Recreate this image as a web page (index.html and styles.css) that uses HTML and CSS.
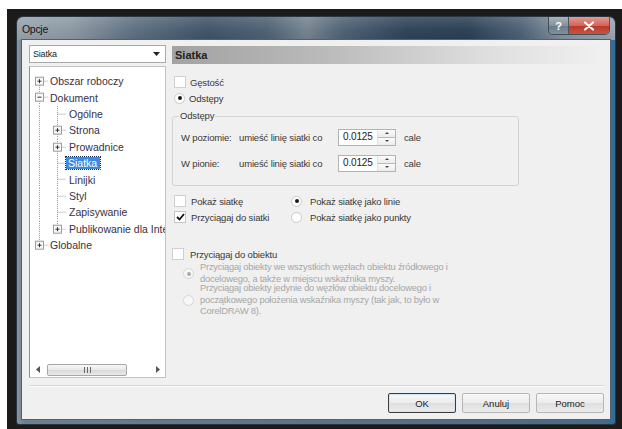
FILE: index.html
```html
<!DOCTYPE html>
<html lang="pl">
<head>
<meta charset="utf-8">
<title>Opcje</title>
<link rel="stylesheet" href="styles.css">
</head>
<body>
<div class="desk">
  <div class="window">
    <div class="titlebar">
      <span class="title">Opcje</span>
      <div class="caption-btns">
        <span class="cbtn help">?</span>
        <span class="cbtn close">
          <svg width="12" height="10" viewBox="0 0 12 10"><path d="M2 1.5 L10 8.5 M10 1.5 L2 8.5" stroke="#fff" stroke-width="2.2" stroke-linecap="round"/></svg>
        </span>
      </div>
    </div>
    <div class="frame">
      <div class="client">
        <div class="panes">
          <div class="nav">
            <div class="combo">
              <span class="combo-text">Siatka</span>
              <span class="combo-btn"><svg width="7" height="4" viewBox="0 0 7 4"><path d="M0 0 H7 L3.5 4 Z" fill="#222"/></svg></span>
            </div>
            <div class="tree">
              <ul class="tree-list">
                <li class="node">
                  <svg class="g0" viewBox="0 0 18 16.4"><path d="M8.5 8.2 V16.4 M8.5 8.2 H17" class="dots"/><rect x="4.5" y="4.2" width="8" height="8" class="box"/><path d="M6.5 8.2 H10.5 M8.5 6.2 V10.2" class="sign"/></svg>
                  <span class="label">Obszar roboczy</span>
                </li>
                <li class="node">
                  <svg class="g0" viewBox="0 0 18 16.4"><path d="M8.5 0 V16.4 M8.5 8.2 H17" class="dots"/><rect x="4.5" y="4.2" width="8" height="8" class="box"/><path d="M6.5 8.2 H10.5" class="sign"/></svg>
                  <span class="label">Dokument</span>
                </li>
                <li class="node">
                  <svg class="g1" viewBox="0 0 37 16.4"><path d="M8.5 0 V16.4 M26.5 0 V16.4 M26.5 8.2 H35" class="dots"/></svg>
                  <span class="label">Ogólne</span>
                </li>
                <li class="node">
                  <svg class="g1" viewBox="0 0 37 16.4"><path d="M8.5 0 V16.4 M26.5 0 V16.4 M26.5 8.2 H35" class="dots"/><rect x="22.5" y="4.2" width="8" height="8" class="box"/><path d="M24.5 8.2 H28.5 M26.5 6.2 V10.2" class="sign"/></svg>
                  <span class="label">Strona</span>
                </li>
                <li class="node">
                  <svg class="g1" viewBox="0 0 37 16.4"><path d="M8.5 0 V16.4 M26.5 0 V16.4 M26.5 8.2 H35" class="dots"/><rect x="22.5" y="4.2" width="8" height="8" class="box"/><path d="M24.5 8.2 H28.5 M26.5 6.2 V10.2" class="sign"/></svg>
                  <span class="label">Prowadnice</span>
                </li>
                <li class="node">
                  <svg class="g1" viewBox="0 0 37 16.4"><path d="M8.5 0 V16.4 M26.5 0 V16.4 M26.5 8.2 H35" class="dots"/></svg>
                  <span class="label selected">Siatka</span>
                </li>
                <li class="node">
                  <svg class="g1" viewBox="0 0 37 16.4"><path d="M8.5 0 V16.4 M26.5 0 V16.4 M26.5 8.2 H35" class="dots"/></svg>
                  <span class="label">Linijki</span>
                </li>
                <li class="node">
                  <svg class="g1" viewBox="0 0 37 16.4"><path d="M8.5 0 V16.4 M26.5 0 V16.4 M26.5 8.2 H35" class="dots"/></svg>
                  <span class="label">Styl</span>
                </li>
                <li class="node">
                  <svg class="g1" viewBox="0 0 37 16.4"><path d="M8.5 0 V16.4 M26.5 0 V16.4 M26.5 8.2 H35" class="dots"/></svg>
                  <span class="label">Zapisywanie</span>
                </li>
                <li class="node">
                  <svg class="g1" viewBox="0 0 37 16.4"><path d="M8.5 0 V16.4 M26.5 0 V8.2 M26.5 8.2 H35" class="dots"/><rect x="22.5" y="4.2" width="8" height="8" class="box"/><path d="M24.5 8.2 H28.5 M26.5 6.2 V10.2" class="sign"/></svg>
                  <span class="label">Publikowanie dla Internetu</span>
                </li>
                <li class="node">
                  <svg class="g0" viewBox="0 0 18 16.4"><path d="M8.5 0 V8.2 M8.5 8.2 H17" class="dots"/><rect x="4.5" y="4.2" width="8" height="8" class="box"/><path d="M6.5 8.2 H10.5 M8.5 6.2 V10.2" class="sign"/></svg>
                  <span class="label">Globalne</span>
                </li>
              </ul>
              <div class="hscroll">
                <span class="sb-arrow"><svg width="4" height="7" viewBox="0 0 4 7"><path d="M4 0 V7 L0 3.5 Z" fill="#555"/></svg></span>
                <span class="sb-thumb"><svg width="7" height="6" viewBox="0 0 7 6"><path d="M0.5 0 V6 M3.5 0 V6 M6.5 0 V6" stroke="#666" stroke-width="1"/></svg></span>
                <span class="sb-track"></span>
                <span class="sb-arrow"><svg width="4" height="7" viewBox="0 0 4 7"><path d="M0 0 V7 L4 3.5 Z" fill="#555"/></svg></span>
              </div>
            </div>
          </div>

          <div class="page">
            <div class="page-head">Siatka</div>

            <div class="opts">
              <label class="opt"><span class="chk"></span>Gęstość</label>
              <label class="opt"><span class="rad on"></span>Odstępy</label>
            </div>

            <div class="group">
              <span class="group-label">Odstępy</span>
              <div class="spacing-row">
                <span class="axis">W poziomie:</span>
                <span class="phrase">umieść linię siatki co</span>
                <span class="spin"><span class="spin-val">0.0125</span><span class="spin-btns"><span class="sp up"></span><span class="sp down"></span></span></span>
                <span class="unit">cale</span>
              </div>
              <div class="spacing-row">
                <span class="axis">W pionie:</span>
                <span class="phrase">umieść linię siatki co</span>
                <span class="spin"><span class="spin-val">0.0125</span><span class="spin-btns"><span class="sp up"></span><span class="sp down"></span></span></span>
                <span class="unit">cale</span>
              </div>
            </div>

            <div class="show-grid">
              <div class="col-left">
                <label class="opt"><span class="chk"></span>Pokaż siatkę</label>
                <label class="opt"><span class="chk checked"><svg width="9" height="8" viewBox="0 0 9 8"><path d="M1 4 L3.5 6.5 L8 1" fill="none" stroke="#111" stroke-width="1.8"/></svg></span>Przyciągaj do siatki</label>
              </div>
              <div class="col-right">
                <label class="opt"><span class="rad on"></span>Pokaż siatkę jako linie</label>
                <label class="opt"><span class="rad"></span>Pokaż siatkę jako punkty</label>
              </div>
            </div>

            <label class="opt snap"><span class="chk"></span>Przyciągaj do obiektu</label>
            <div class="snap-choices">
              <div class="choice">
                <span class="rad off on"></span>
                <span class="choice-text">Przyciągaj obiekty we wszystkich węzłach obiektu źródłowego i<br>docelowego, a także w miejscu wskaźnika myszy.</span>
              </div>
              <div class="choice">
                <span class="rad off"></span>
                <span class="choice-text">Przyciągaj obiekty jedynie do węzłów obiektu docelowego i<br>początkowego położenia wskaźnika myszy (tak jak, to było w<br>CorelDRAW 8).</span>
              </div>
            </div>
          </div>
        </div>

        <div class="sep"></div>

        <div class="buttons">
          <button class="btn default">OK</button>
          <button class="btn">Anuluj</button>
          <button class="btn">Pomoc</button>
        </div>
      </div>
    </div>
  </div>
</div>
</body>
</html>
```

FILE: styles.css
```css
* { box-sizing: border-box; }

html, body {
  margin: 0;
  padding: 0;
  background: #fff;
}

body {
  width: 622px;
  height: 429px;
  overflow: hidden;
  font-family: "Liberation Sans", Arial, sans-serif;
  color: #333;
}

/* dark desktop behind the dialog */
.desk {
  margin: 9px 0 0 7px;
  width: 615px;
  height: 420px;
  background: #1c1b19;
  padding: 8px 7px 5px 10px;
}

.window {
  width: 598px;
  height: 407px;
  display: flex;
  flex-direction: column;
  border-radius: 6px 6px 2px 2px;
  overflow: hidden;
  box-shadow: 0 0 0 1px #2a3642;
}

/* glass caption */
.titlebar {
  height: 23px;
  flex: none;
  display: flex;
  align-items: flex-start;
  justify-content: space-between;
  background:
    linear-gradient(to bottom, rgba(255,255,255,0.14), rgba(255,255,255,0.02) 55%, rgba(0,0,0,0.05)),
    linear-gradient(to right, #98a3ad 0px, #8b97a2 55px, #5b6d7f 120px, #3f5367 190px, #4d6073 250px, #74848f 290px, #4e6174 325px, #2e4257 390px, #2a3f54 450px, #4d6175 505px, #84929f 545px, #9ba6b1 598px);
}

.title {
  padding: 6px 0 0 5px;
  font-size: 10.5px;
  letter-spacing: -0.3px;
  color: #151515;
}

.caption-btns {
  display: flex;
  margin: 0 6px 0 0;
  height: 17px;
  border-radius: 0 0 4px 4px;
  overflow: hidden;
  box-shadow: 0 0 0 1px rgba(40,50,60,0.7);
}

.cbtn {
  height: 17px;
  display: flex;
  align-items: center;
  justify-content: center;
}

.cbtn.help {
  width: 20px;
  color: #fff;
  font-size: 11px;
  font-weight: bold;
  background: linear-gradient(to bottom, #a9b3bd, #85929f 50%, #6a7a88 51%, #82909d);
  border-right: 1px solid #4b5560;
}

.cbtn.close {
  width: 40px;
  background: linear-gradient(to bottom, #e49a8e, #d2645a 50%, #b8372c 51%, #c9533f);
}

/* side and bottom frame around the client area */
.frame {
  flex: 1;
  padding: 0 5px 5px 5px;
  background: linear-gradient(to right, #8794a0 0px, #6f7f8e 8px, #5f7285 300px, #4a6a86 585px, #2d6e9e 598px);
}

.client {
  height: 100%;
  background: #f0f0f0;
  padding: 5px 6px 6px 7px;
  display: flex;
  flex-direction: column;
  box-shadow: 0 0 0 1px #53616e;
}

.panes {
  height: 333px;
  display: flex;
  gap: 6px;
}

/* left navigation column */
.nav {
  width: 137px;
  display: flex;
  flex-direction: column;
  gap: 3px;
}

.combo {
  height: 18px;
  display: flex;
  align-items: center;
  background: #fff;
  border: 1px solid #a9a9a9;
}

.combo-text {
  flex: 1;
  padding-left: 3px;
  font-size: 9px;
  letter-spacing: -0.2px;
  color: #222;
}

.combo-btn {
  width: 17px;
  height: 100%;
  display: flex;
  align-items: center;
  justify-content: center;
}

.tree {
  flex: 1;
  display: flex;
  flex-direction: column;
  background: #fff;
  border: 1px solid #c3c3c3;
  border-left-color: #8d8d8d;
  padding-left: 1px;
  overflow: hidden;
}

.tree-list {
  list-style: none;
  margin: 0;
  padding: 6px 0 0 0;
  flex: 1;
  overflow: hidden;
}

.node {
  height: 16.4px;
  display: flex;
  align-items: center;
  white-space: nowrap;
}

.node svg { height: 16.4px; flex: none; }
.node .g0 { width: 18px; }
.node .g1 { width: 37px; }

.dots {
  fill: none;
  stroke: #9a9a9a;
  stroke-width: 1;
  stroke-dasharray: 1 1;
}

.box {
  fill: #f7f7f7;
  stroke: #9c9c9c;
  stroke-width: 1;
}

.sign {
  stroke: #333;
  stroke-width: 1;
}

.label {
  font-size: 10.5px;
  color: #3b2f45;
  padding: 0 1px;
  line-height: 12px;
}

.label.selected {
  background: #3d8be0;
  color: #fff;
  outline: 1px dotted #1c2d55;
  margin-left: -2px;
  padding: 0 3px 0 2px;
}

.hscroll {
  height: 13px;
  display: flex;
  align-items: center;
  margin-bottom: 1px;
}

.sb-arrow {
  width: 14px;
  height: 13px;
  display: flex;
  align-items: center;
  justify-content: center;
}

.sb-thumb {
  width: 80px;
  height: 12px;
  margin-left: 2px;
  display: flex;
  align-items: center;
  justify-content: center;
  border: 1px solid #a6a6a6;
  border-radius: 2px;
  background: linear-gradient(to bottom, #f8f8f8, #e6e6e6 50%, #d9d9d9 51%, #e9e9e9);
}

.sb-track { flex: 1; }

/* right settings page */
.page {
  flex: 1;
  display: flex;
  flex-direction: column;
  font-size: 9.5px;
  letter-spacing: -0.15px;
  color: #383838;
}

.page-head {
  margin-top: 1px;
  height: 18px;
  display: flex;
  align-items: center;
  padding-left: 3px;
  font-size: 11px;
  font-weight: bold;
  letter-spacing: 0;
  color: #222;
  background: linear-gradient(to right, #a2a2a2 0%, #bababa 35%, #e0e0e0 75%, #f0f0f0 100%);
}

.opts {
  margin-top: 10px;
  display: flex;
  flex-direction: column;
}

.opt {
  height: 16px;
  display: flex;
  align-items: center;
  white-space: nowrap;
}

.chk {
  width: 12px;
  height: 12px;
  margin: 0 4px 0 2px;
  background: #fff;
  border: 1px solid #cfcfcf;
  display: flex;
  align-items: center;
  justify-content: center;
  flex: none;
}

.chk.checked { border-color: #c4c4c4; }

.rad {
  width: 11px;
  height: 11px;
  margin: 0 4px 0 2px;
  border-radius: 50%;
  background: #fff;
  border: 1px solid #c9c9c9;
  display: flex;
  align-items: center;
  justify-content: center;
  flex: none;
}

.rad.on::after {
  content: "";
  width: 4px;
  height: 4px;
  border-radius: 50%;
  background: #1a1a1a;
}

.rad.off {
  border-color: #d6d6d6;
  background: #f7f7f7;
}

.rad.off.on::after { background: #a9a9a9; }

.group {
  margin-top: 10px;
  width: 347px;
  border: 1px solid #d3d3d3;
  border-radius: 3px;
  padding: 0 0 12px 8px;
  display: flex;
  flex-direction: column;
  gap: 6px;
}

.group-label {
  align-self: flex-start;
  margin: -7px 0 -1px -2px;
  padding: 0 1px;
  line-height: 12px;
  background: #f0f0f0;
}

.spacing-row {
  height: 20px;
  display: flex;
  align-items: center;
  white-space: nowrap;
}

.axis { width: 58px; }
.phrase { width: 99px; }

.spin {
  width: 58px;
  height: 17px;
  display: flex;
  background: #fff;
  border: 1px solid #b3b3b3;
}

.spin-val {
  flex: 1;
  padding: 1px 0 0 4px;
  font-size: 10px;
  color: #222;
}

.spin-btns {
  width: 18px;
  display: flex;
  flex-direction: column;
  border-left: 1px solid #e2e2e2;
}

.sp {
  flex: 1;
  display: flex;
  align-items: center;
  justify-content: center;
  background: linear-gradient(to bottom, #fbfbfb, #ececec);
}

.sp.up { border-bottom: 1px solid #b8b8b8; }

.sp.up::after {
  content: "";
  border-left: 2px solid transparent;
  border-right: 2px solid transparent;
  border-bottom: 2px solid #444;
}

.sp.down::after {
  content: "";
  border-left: 2px solid transparent;
  border-right: 2px solid transparent;
  border-top: 2px solid #444;
}

.unit { margin-left: 8px; }

.show-grid {
  margin-top: 7px;
  display: flex;
}

.col-left {
  width: 117px;
  display: flex;
  flex-direction: column;
}

.col-left .chk { margin-right: 5px; }

.col-right {
  display: flex;
  flex-direction: column;
}

.col-right .rad { margin-right: 8px; }

.snap { margin-top: 21px; }
.snap .chk { margin-left: 0; margin-right: 6px; }

.snap-choices {
  display: flex;
  flex-direction: column;
  margin-top: 0;
  padding-left: 11px;
}

.choice {
  display: flex;
  align-items: center;
}

.choice .rad { margin: 0 6px 0 0; }

.choice-text {
  font-size: 9.3px;
  line-height: 11.5px;
  letter-spacing: -0.2px;
  color: #a6a6a6;
  white-space: nowrap;
}

.choice + .choice { margin-top: -2px; }

/* bottom separator and buttons */
.sep {
  margin-top: 7px;
  height: 2px;
  border-top: 1px solid #d7d7d7;
  border-bottom: 1px solid #fdfdfd;
}

.buttons {
  margin-top: 6px;
  display: flex;
  justify-content: flex-end;
  gap: 6px;
}

.btn {
  width: 68px;
  height: 20px;
  padding: 0;
  font-family: "Liberation Sans", Arial, sans-serif;
  font-size: 9.5px;
  color: #222;
  border: 1px solid #b6b6b6;
  border-radius: 2px;
  background: linear-gradient(to bottom, #f7f7f7, #ececec 50%, #dfdfdf 51%, #ebebeb);
}

.btn.default {
  border-color: #3d3d3d;
  box-shadow: inset 0 0 0 1px #cfe5f5;
}
```
